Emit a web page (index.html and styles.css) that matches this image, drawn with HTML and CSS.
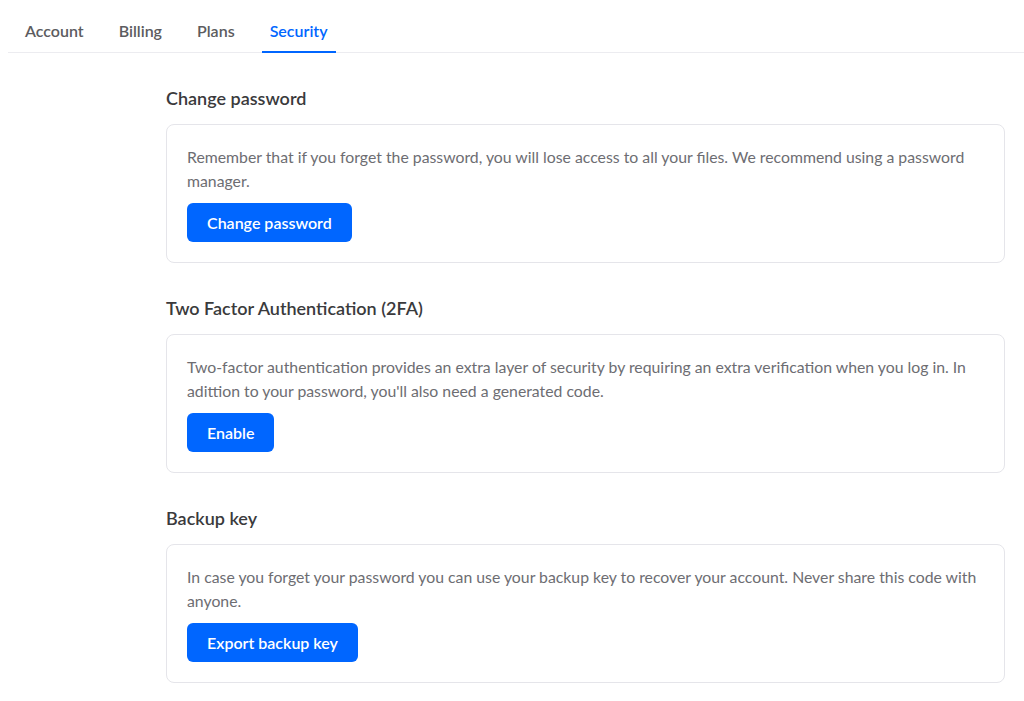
FILE: index.html
```html
<!DOCTYPE html>
<html lang="en">
<head>
<meta charset="utf-8">
<title>Security settings</title>
<link rel="stylesheet" href="styles.css">
</head>
<body>
  <nav class="tabs">
    <a class="tab">Account</a>
    <a class="tab">Billing</a>
    <a class="tab">Plans</a>
    <a class="tab active">Security</a>
  </nav>
  <main class="content">
    <section class="section">
      <h2 class="section-title">Change password</h2>
      <div class="card">
        <p class="card-text">Remember that if you forget the password, you will lose access to all your files. We recommend using a password manager.</p>
        <button class="btn">Change password</button>
      </div>
    </section>
    <section class="section">
      <h2 class="section-title">Two Factor Authentication (2FA)</h2>
      <div class="card">
        <p class="card-text">Two-factor authentication provides an extra layer of security by requiring an extra verification when you log in. In adittion to your password, you'll also need a generated code.</p>
        <button class="btn">Enable</button>
      </div>
    </section>
    <section class="section">
      <h2 class="section-title">Backup key</h2>
      <div class="card">
        <p class="card-text">In case you forget your password you can use your backup key to recover your account. Never share this code with anyone.</p>
        <button class="btn">Export backup key</button>
      </div>
    </section>
  </main>
</body>
</html>
```
FILE: styles.css
```css
html, body {
  background: #ffffff;
}
body {
  margin: 0 0 0 8px;
  font-family: "Lato", "Noto Sans", sans-serif;
  color: #3a3a3c;
}
.tabs {
  display: flex;
  gap: 19px;
  padding-left: 9px;
  border-bottom: 1px solid #ececf0;
  height: 53px;
  box-sizing: border-box;
}
.tab {
  display: flex;
  align-items: flex-end;
  padding: 0 8px 10px;
  font-size: 16px;
  line-height: 20px;
  font-weight: 600;
  color: #5c5c60;
  cursor: pointer;
  border-bottom: 2px solid transparent;
  margin-bottom: -1px;
}
.tab.active {
  color: #0066ff;
  border-bottom-color: #0066ff;
}
.content {
  margin: 0 19px 0 158px;
  padding-top: 33px;
}
.section {
  margin-bottom: 33px;
}
.section-title {
  margin: 0 0 14px;
  font-size: 18px;
  line-height: 24px;
  font-weight: 600;
  color: #3a3a3c;
}
.card {
  border: 1px solid #e5e5ea;
  border-radius: 8px;
  padding: 20px;
}
.card-text {
  margin: 0 0 10px;
  font-size: 15.8px;
  line-height: 24px;
  color: #6d6d72;
}
.btn {
  display: block;
  height: 39px;
  padding: 0 20px;
  border: none;
  border-radius: 6px;
  background: #0066ff;
  color: #ffffff;
  font-family: inherit;
  font-size: 16px;
  font-weight: 600;
  cursor: pointer;
}
```
